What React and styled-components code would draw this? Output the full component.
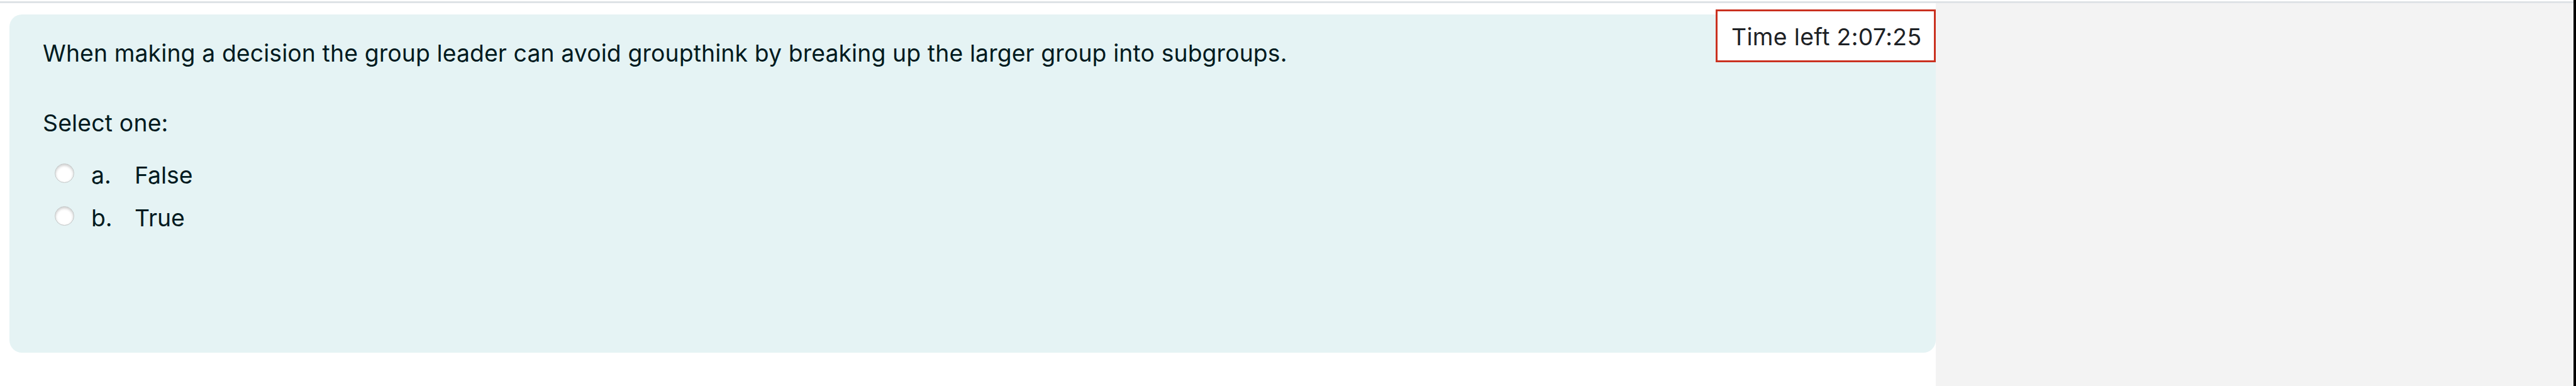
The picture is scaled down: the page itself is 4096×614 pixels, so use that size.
import React from 'react'
import styled, { createGlobalStyle } from 'styled-components';

const GlobalStyle = createGlobalStyle`
    * { box-sizing: border-box; }
    body {
        margin: 0;
        background: #fff;
        overflow: hidden;
    }
`;

const Page = styled.div`
    display: flex;
    position: relative;
    width: 4096px;
    height: 614px;
    font-family: Inter, "Liberation Sans", sans-serif;
    font-size: 37.3px;
    line-height: 58px;
    color: #001a1e;
    white-space: nowrap;
`;

const TopRule = styled.div`
    position: absolute;
    top: 2px;
    left: 0;
    right: 4px;
    height: 3px;
    background: #dee2e6;
`;

const Main = styled.main`
    width: 3078px;
    padding: 23px 0 0 15px;
`;

const Drawer = styled.aside`
    flex: 1;
    margin-top: 5px;
    background: #f3f3f3;
`;

const Edge = styled.div`
    width: 4px;
    background: #000;
`;

const Card = styled.section`
    height: 538px;
    padding: 33px 53px;
    border-radius: 20px;
    background: #e5f3f4;
`;

const Question = styled.p`
    margin: 0 0 53px;
    letter-spacing: 0.133px;
`;

const Prompt = styled.p`
    margin: 0 0 25px;
    letter-spacing: 0.2px;
`;

const Answer = styled.label`
    display: flex;
    align-items: center;
    height: 58px;
    margin-bottom: 9.5px;
    padding-left: 19px;
`;

const Radio = styled.input`
    appearance: none;
    width: 31px;
    height: 31px;
    margin: 0 27px 7px 0;
    border: 1px solid #c3c7c7;
    border-radius: 50%;
    background: #fff;
    box-shadow: inset 0 2px 4px rgba(0, 0, 0, 0.22);
`;

const Letter = styled.span`
    width: 69px;
`;

const Timer = styled.div`
    position: absolute;
    top: 15px;
    left: 2728px;
    width: 350px;
    height: 84px;
    padding: 12px 0 0 22px;
    border: 3px solid #ca3120;
    background: #fff;
    color: #1d2125;
    letter-spacing: 0.36px;
`;

const answers = [
    { letter: 'a.', text: 'False' },
    { letter: 'b.', text: 'True' },
];

const App = () => {
    return (
    <Page>
        <GlobalStyle />
        <Main>
            <Card>
                <Question>
                    When making a decision the group leader can avoid groupthink by breaking up the larger group into subgroups.
                </Question>
                <Prompt>Select one:</Prompt>
                {answers.map(answer => (
                    <Answer key={answer.letter}>
                        <Radio type="radio" name="answer" />
                        <Letter>{answer.letter}</Letter>
                        <span>{answer.text}</span>
                    </Answer>
                ))}
            </Card>
        </Main>
        <Drawer />
        <Edge />
        <TopRule />
        <Timer>Time left 2:07:25</Timer>
    </Page>
    )
};

export default App;
